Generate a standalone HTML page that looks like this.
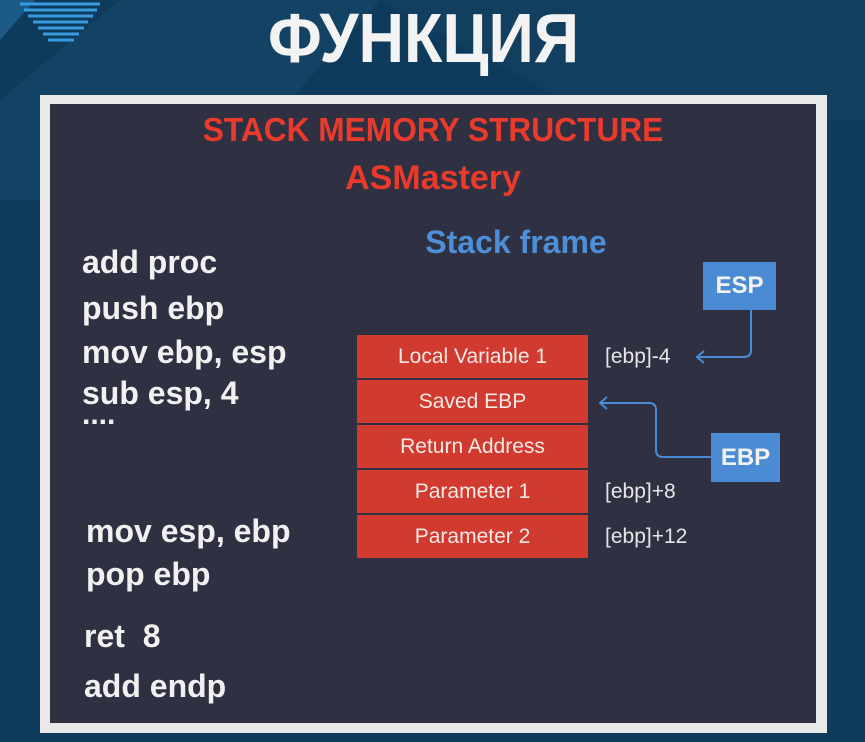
<!DOCTYPE html>
<html><head><meta charset="utf-8"><style>
*{margin:0;padding:0;box-sizing:border-box}
body{width:865px;height:742px;overflow:hidden;background:#0e3b5c;position:relative;font-family:"Liberation Sans",sans-serif}
.abs{position:absolute;white-space:nowrap}
.code{color:#f1f1f1;font-weight:bold;font-size:32px;left:82px;line-height:1}
.box{position:absolute;left:357px;width:231px;height:43px;background:#d13a2e;color:#f3e9e6;font-size:21px;text-align:center;line-height:43px}
.lab{color:#e6e6e6;font-size:21px;left:605px;line-height:1}
</style></head><body>
<svg class="abs" style="left:0;top:0" width="865" height="742">
<polygon points="380,0 865,0 865,120 600,120" fill="#123f60"/>
<polygon points="0,100 120,0 380,0 200,200 0,200" fill="#154869" opacity=".6"/>
<polygon points="0,0 35,0 0,40" fill="#1c5b88"/>
<g stroke="#3b9be0" stroke-width="3">
<line x1="20" y1="4" x2="100" y2="4"/><line x1="24" y1="10" x2="97" y2="10"/><line x1="28" y1="16" x2="93" y2="16"/><line x1="33" y1="22" x2="88" y2="22"/><line x1="38" y1="28" x2="84" y2="28"/><line x1="43" y1="34" x2="79" y2="34"/><line x1="48" y1="40" x2="74" y2="40"/>
</g>
<rect x="40" y="95" width="787" height="638" fill="#e9e9e9"/>
<rect x="50" y="104" width="766" height="619" fill="#2f3142"/>
<g fill="none" stroke="#4a8bd4" stroke-width="2">
<path d="M751 310 V350 Q751 357 744 357 H698"/>
<path d="M704 351 L697 357 L704 363"/>
<path d="M711 457 H663 Q656 457 656 450 V410 Q656 403 649 403 H600"/>
<path d="M607 397 L600 403 L607 409"/>
</g>
</svg>
<div class="abs" style="left:232px;top:3px;width:383px;text-align:center;color:#f3f3f3;font-size:70px;font-weight:bold;line-height:70px;transform:scaleX(0.9);transform-origin:center">ФУНКЦИЯ</div>
<div class="abs" style="left:100px;width:666px;top:113px;text-align:center;color:#ea3a2b;font-weight:bold;font-size:33px;line-height:34px;transform:scaleX(0.96)">STACK MEMORY STRUCTURE</div>
<div class="abs" style="left:150px;width:566px;top:161px;text-align:center;color:#ea3a2b;font-weight:bold;font-size:34px;line-height:34px">ASMastery</div>
<div class="abs" style="left:400px;width:232px;top:225px;text-align:center;color:#4d8fd8;font-weight:bold;font-size:32px;line-height:34px">Stack frame</div>
<div class="abs code" style="top:246px">add proc</div>
<div class="abs code" style="top:292px">push ebp</div>
<div class="abs code" style="top:336px">mov ebp, esp</div>
<div class="abs code" style="top:377px">sub esp, 4</div>
<div class="abs code" style="top:400px;font-size:30px">....</div>
<div class="abs code" style="top:515px;left:86px">mov esp, ebp</div>
<div class="abs code" style="top:558px;left:86px">pop ebp</div>
<div class="abs code" style="top:620px;left:84px">ret&nbsp; 8</div>
<div class="abs code" style="top:670px;left:84px">add endp</div>
<div class="box" style="top:335px">Local Variable 1</div>
<div class="box" style="top:380px">Saved EBP</div>
<div class="box" style="top:425px">Return Address</div>
<div class="box" style="top:470px">Parameter 1</div>
<div class="box" style="top:515px">Parameter 2</div>
<div class="abs lab" style="top:346px">[ebp]-4</div>
<div class="abs lab" style="top:481px">[ebp]+8</div>
<div class="abs lab" style="top:526px">[ebp]+12</div>
<div class="abs" style="left:703px;top:262px;width:73px;height:48px;background:#4a8bd4;color:#f2f2f2;font-weight:bold;font-size:24px;text-align:center;line-height:48px">ESP</div>
<div class="abs" style="left:711px;top:433px;width:69px;height:49px;background:#4a8bd4;color:#f2f2f2;font-weight:bold;font-size:24px;text-align:center;line-height:49px">EBP</div>
</body></html>
